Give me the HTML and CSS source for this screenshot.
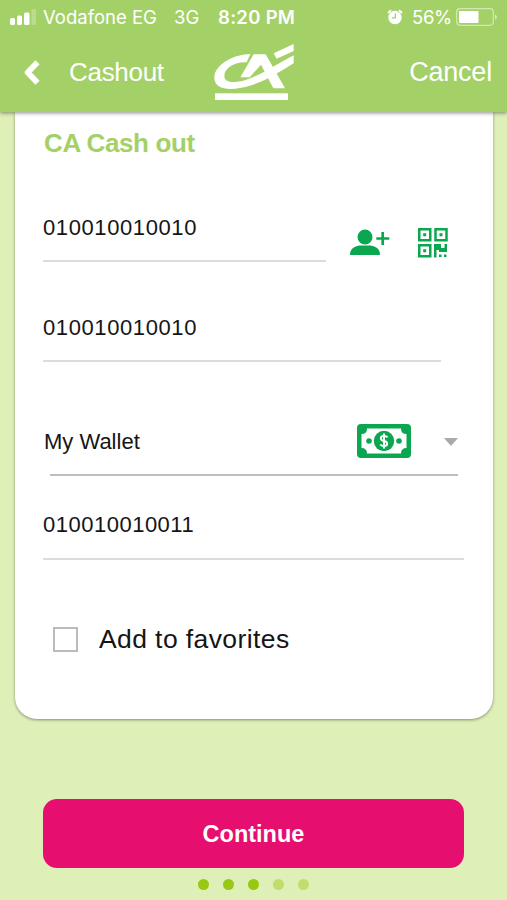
FILE: index.html
```html
<!DOCTYPE html>
<html lang="en">
<head>
<meta charset="utf-8">
<title>Cashout</title>
<link rel="stylesheet" href="styles.css">
</head>
<body>
<header class="header">
  <div class="status">
    <svg class="signal" width="26" height="16" viewBox="0 0 26 16" fill="#fff"><rect x="0" y="9" width="5" height="7" rx="1.500"/><rect x="7" y="6.500" width="5" height="9.500" rx="1.500"/><rect x="14" y="3.500" width="5.500" height="12.500" rx="1.500"/><rect x="21.500" y="0" width="4.500" height="16" rx="1.500" opacity=".25"/></svg>
    <span class="carrier">Vodafone EG</span>
    <span class="network">3G</span>
    <span class="time">8:20 PM</span>
    <svg class="alarm" width="16" height="16" viewBox="0 0 16 16"><circle cx="8" cy="8.500" r="6.700" fill="#fff"/><path d="M1 4 4 1.200M15 4 12 1.200" stroke="#fff" stroke-width="1.800"/><path d="M8.300 4.500v4.300H5" fill="none" stroke="#a4d167" stroke-width="1.300"/></svg>
    <span class="percent">56%</span>
    <svg class="battery" width="42" height="18" viewBox="0 0 42 18"><rect x=".7" y=".7" width="36.600" height="16.600" rx="3.500" fill="none" stroke="#fff" stroke-opacity=".5" stroke-width="1.200"/><rect x="3" y="3" width="19.500" height="12" rx="1" fill="#fff"/><path d="M39 6.500q2 .5 2 2.500t-2 2.500z" fill="#fff" opacity=".55"/></svg>
  </div>
  <nav class="nav">
    <svg class="back" width="18" height="27" viewBox="0 0 18 27"><path d="M14.500 3.200 4.700 13.500 14.500 23.800" fill="none" stroke="#fff" stroke-width="5.800" stroke-linejoin="round"/></svg>
    <span class="back-label">Cashout</span>
    <svg class="logo" width="100" height="70" viewBox="0 0 300 210" fill="#fff"><path d="M136 48C77 50 28 84 28 119C28 149 62 158 105 150C166 140 219 105 266 76V52Q232 71 204 86C165 109 138 122 108 130C76 136 58 130 58 113C58 90 90 71 125 73Z"/><path d="M106 118 146 49H182L240 151H205L168 80 134 118Z"/><path d="M206 46 266 18V39L215 62Z"/><rect x="30" y="166" width="219" height="20"/></svg>
    <span class="cancel">Cancel</span>
  </nav>
</header>
<main class="page">
  <section class="card">
    <h1 class="title">CA Cash out</h1>
    <div class="recipient">
      <div class="field first">010010010010</div>
      <svg class="person" width="40" height="27" viewBox="0 0 40 27" fill="#0ba750"><circle cx="15" cy="8" r="7.500"/><path d="M0 26C0 19 5 16.500 12 16.500h6c7 0 12 2.500 12 9.500z"/><path d="M32.700 3v13M26.300 9.500h13" stroke="#0ba750" stroke-width="2.700"/></svg>
      <svg class="qr" width="30" height="30" viewBox="0 0 30 30" fill="#0ba750"><g fill="none" stroke="#0ba750" stroke-width="2.500"><rect x="1.250" y="1.250" width="11" height="11"/><rect x="17.500" y="1.250" width="11" height="11"/><rect x="1.250" y="17.250" width="11" height="11"/></g><path d="M5.200 5.200h3v3h-3zM21.500 5.200h3v3h-3zM5.200 21.200h3v3h-3zM16 16h7v4h3.500v-4h2.500v8h-8v-2h-2.500v7.500H16zM21 26.500h2.500v2.500H21zM26 26.500h2.500v2.500H26z"/></svg>
    </div>
    <div class="field second">010010010010</div>
    <div class="wallet">
      <span class="wallet-name">My Wallet</span>
      <svg class="money" width="54" height="34" viewBox="0 0 54 34"><rect width="54" height="34" rx="4" fill="#0ba750"/><path d="M10 4.500H44Q44 10 49.500 10V24Q44 24 44 29.500H10Q10 24 4.500 24V10Q10 10 10 4.500Z" fill="#fff"/><circle cx="27" cy="17" r="10.200" fill="#0ba750"/><circle cx="12" cy="17" r="2.800" fill="#0ba750"/><circle cx="42" cy="17" r="2.800" fill="#0ba750"/><path d="M30.500 13.300Q29.500 12 27 12C22.800 12 22.800 16.200 27 17S31.200 22 27 22Q24.500 22 23.300 20.500M27 9.500V24.500" fill="none" stroke="#fff" stroke-width="2"/></svg>
      <svg class="caret" width="14" height="8" viewBox="0 0 14 8"><path d="M0 0H14L7 8Z" fill="#aaa"/></svg>
    </div>
    <div class="field third">010010010011</div>
    <label class="favorite"><span class="box"></span><span>Add to favorites</span></label>
  </section>
  <button class="continue">Continue</button>
  <div class="dots"><i class="dot"></i><i class="dot"></i><i class="dot"></i><i class="dot off"></i><i class="dot off"></i></div>
</main>
</body>
</html>
```
FILE: styles.css
```css
* { box-sizing: border-box; }
body { margin: 0; height: 900px; overflow: hidden; background: #deefb7; font-family: "Liberation Sans", Arial, sans-serif; color: #151515; }
svg { display: block; flex: none; }
span { white-space: nowrap; }
.header { position: relative; height: 112px; background: #a4d167; color: #fff; box-shadow: 0 1px 4px rgba(0,0,0,.45); }
.status { height: 34px; display: flex; align-items: center; padding-left: 10px; font: 18.500px/34px Inter, sans-serif; }
.signal { margin-right: 7px; }
.carrier { width: 131px; }
.network { width: 44px; }
.time { width: 169px; font-weight: 600; letter-spacing: .3px; }
.alarm { margin-right: 9px; }
.percent { width: 44px; letter-spacing: -.3px; }
.nav { height: 78px; display: flex; align-items: center; padding: 0 15px 2px 23px; font-size: 26px; }
.back { margin-right: 28px; }
.back-label { width: 136px; letter-spacing: -.3px; }
.logo { position: relative; top: 1px; }
.cancel { margin-left: auto; font-size: 27px; letter-spacing: -.2px; }
.page { display: flex; flex-direction: column; align-items: center; }
.card { width: 478px; height: 607px; margin-right: -1px; padding: 16px 28px 0; background: #fff; border-radius: 0 0 22px 22px; box-shadow: 0 1px 3px rgba(0,0,0,.4); }
.title { margin: 0 0 0 1px; font-size: 26px; line-height: 30px; letter-spacing: -.4px; color: #a4d167; }
.recipient { display: flex; margin-top: 54px; }
.field { height: 50px; font-size: 22px; line-height: 32px; letter-spacing: .6px; border-bottom: 2px solid #dcdcdc; }
.first { width: 283px; }
.person { margin: 17px 28px 0 24px; }
.qr { margin-top: 16px; }
.second { width: 398px; margin-top: 50px; }
.wallet { width: 408px; height: 54px; margin: 60px 0 0 7px; display: flex; align-items: center; padding-bottom: 13px; border-bottom: 2px solid #bdbdbd; font-size: 22px; }
.wallet-name { margin-left: -6px; width: 316px; }
.money { margin-bottom: 2px; }
.caret { margin-left: 33px; }
.third { width: 421px; margin-top: 33px; height: 51px; letter-spacing: .5px; }
.favorite { display: flex; align-items: center; height: 32px; margin: 63px 0 0 10px; font-size: 26.500px; letter-spacing: .4px; }
.box { width: 25px; height: 25px; margin-right: 21px; border: 2px solid #bbb; }
.continue { width: 421px; height: 69px; margin-top: 80px; border: 0; border-radius: 14px; background: #e60f70; color: #fff; font: bold 23.500px "Liberation Sans", Arial, sans-serif; padding: 2px 0 0; }
.dots { display: flex; gap: 14.200px; margin-top: 11px; }
.dot { width: 11px; height: 11px; border-radius: 50%; background: #97c914; }
.off { background: #bfde6c; }
```
